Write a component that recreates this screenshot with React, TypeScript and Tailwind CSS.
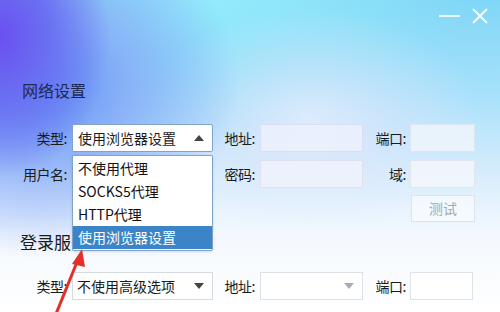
import React from "react"

const font = { fontFamily: '"Noto Sans CJK SC", "Noto Sans", sans-serif' }

function Caret({ up = false, light = false }: { up?: boolean; light?: boolean }) {
    return (
        <svg width="10" height="6" viewBox="0 0 10 6" className="shrink-0">
            {up ? (
                <path d="M0 6 L5 0 L10 6 Z" fill="#444" />
            ) : (
                <path d="M0 0 L10 0 L5 6 Z" fill={light ? "#a9adb3" : "#444"} />
            )}
        </svg>
    )
}

function Label({ text, w, ml }: { text: string; w: string; ml: string }) {
    return (
        <div className={`${w} ${ml} flex shrink-0 justify-end whitespace-nowrap text-[14px] leading-[28px] tracking-[-0.5px] text-[#1b1b1b]`}>
            {text}
        </div>
    )
}

export default function App() {
    const options = ["不使用代理", "SOCKS5代理", "HTTP代理", "使用浏览器设置"]

    return (
        <main
            style={font}
            className="relative h-[312px] w-[500px] overflow-hidden bg-[radial-gradient(ellipse_110px_140px_at_0%_12%,#6a50f0_0%,#6a70f2_45%,transparent_100%),radial-gradient(ellipse_200px_170px_at_8%_28%,#5e8ef5_0%,#86a8f7cc_45%,transparent_100%),radial-gradient(ellipse_170px_110px_at_62%_38%,#e9ecfdcc_0%,#dfe5fb80_45%,transparent_100%),radial-gradient(ellipse_260px_150px_at_42%_0%,#93ebfb_0%,#8ee3f9_40%,transparent_100%),linear-gradient(180deg,#80d6f7_0%,#a7e1fa_30%,#d6ecfc_55%,#f3f8fe_75%,#ffffff_100%)]"
        >
            {/* window controls */}
            <div className="flex h-[38px] items-center justify-end gap-[12px] pr-[12px] pb-[6px]">
                <div className="h-[2px] w-[21px] bg-white/80" />
                <svg width="16" height="16" viewBox="0 0 16 16">
                    <path d="M1 1 L15 15 M15 1 L1 15" stroke="white" strokeWidth="2" strokeOpacity="0.9" />
                </svg>
            </div>

            <h1 className="ml-[22px] mt-[42px] h-[20px] text-[16px] leading-[20px] text-[#1c2950]">网络设置</h1>

            {/* row 1 */}
            <div className="mt-[24px] flex h-[28px]">
                <Label text="类型:" w="w-[67px]" ml="ml-0" />
                <div className="relative ml-[5px] w-[141px]">
                    <div className="flex h-[28px] items-center justify-between rounded-[2px] border border-[#7ea4c8] bg-white px-[5px] pr-[8px] text-[14px] text-[#1b1b1b]">
                        <span>使用浏览器设置</span>
                        <Caret up />
                    </div>
                    {/* open dropdown */}
                    <div className="absolute left-0 top-[31px] z-10 w-[141px] rounded-[2px] border border-[#7ea4c8] bg-white py-[1px] shadow-sm">
                        {options.map((o, i) => (
                            <div
                                key={o}
                                className={
                                    i === 3
                                        ? "h-[23px] bg-[#3c84c8] pl-[5px] text-[14px] leading-[23px] text-white"
                                        : "h-[23px] pl-[5px] text-[14px] leading-[23px] text-[#111]"
                                }
                            >
                                {o}
                            </div>
                        ))}
                    </div>
                </div>
                <Label text="地址:" w="w-[31px]" ml="ml-[11px]" />
                <div className="ml-[5px] h-[28px] w-[103px] border border-[#d9dff0] bg-[#eef1fd]/80" />
                <Label text="端口:" w="w-[31px]" ml="ml-[12px]" />
                <div className="ml-[4px] h-[28px] w-[65px] border border-[#dde5f0] bg-[#f1f6fd]/80" />
            </div>

            {/* row 2 */}
            <div className="mt-[8px] flex h-[28px]">
                <Label text="用户名:" w="w-[67px]" ml="ml-0" />
                <div className="ml-[5px] h-[28px] w-[141px] border border-[#dfe4ee] bg-white/70" />
                <Label text="密码:" w="w-[31px]" ml="ml-[11px]" />
                <div className="ml-[5px] h-[28px] w-[103px] border border-[#dde1f0] bg-[#f1f2fd]/80" />
                <Label text="域:" w="w-[31px]" ml="ml-[12px]" />
                <div className="ml-[4px] h-[28px] w-[65px] border border-[#e1e5ee] bg-[#f5f7fd]/80" />
            </div>

            {/* row 3 */}
            <div className="mt-[7px] flex h-[27px]">
                <button className="ml-[411px] h-[27px] w-[64px] border border-[#e0e4ea] bg-white/50 text-[14px] text-[#a6a9ad]">
                    测试
                </button>
            </div>

            <h2 className="ml-[20px] mt-[10px] h-[20px] text-[17px] leading-[20px] text-[#1b1b1b]">登录服务器</h2>

            {/* row 4 */}
            <div className="mt-[20px] flex h-[28px]">
                <Label text="类型:" w="w-[67px]" ml="ml-0" />
                <div className="ml-[5px] flex h-[28px] w-[141px] items-center justify-between border border-[#d6dbe2] bg-white pl-[4px] pr-[8px] text-[14px] text-[#1b1b1b]">
                    <span>不使用高级选项</span>
                    <Caret />
                </div>
                <Label text="地址:" w="w-[31px]" ml="ml-[11px]" />
                <div className="ml-[5px] flex h-[28px] w-[103px] items-center justify-end border border-[#dde0e6] bg-white pr-[8px]">
                    <Caret light />
                </div>
                <Label text="端口:" w="w-[31px]" ml="ml-[12px]" />
                <div className="ml-[4px] h-[28px] w-[63px] border border-[#dfe2e8] bg-white" />
            </div>

            {/* red annotation arrow */}
            <svg className="pointer-events-none absolute left-0 top-0 z-20" width="500" height="312" viewBox="0 0 500 312">
                <line x1="56" y1="314" x2="77" y2="262" stroke="#e3302a" strokeWidth="3" />
                <path d="M82 249 L72 264 L85 267 Z" fill="#e3302a" />
            </svg>
        </main>
    )
}
